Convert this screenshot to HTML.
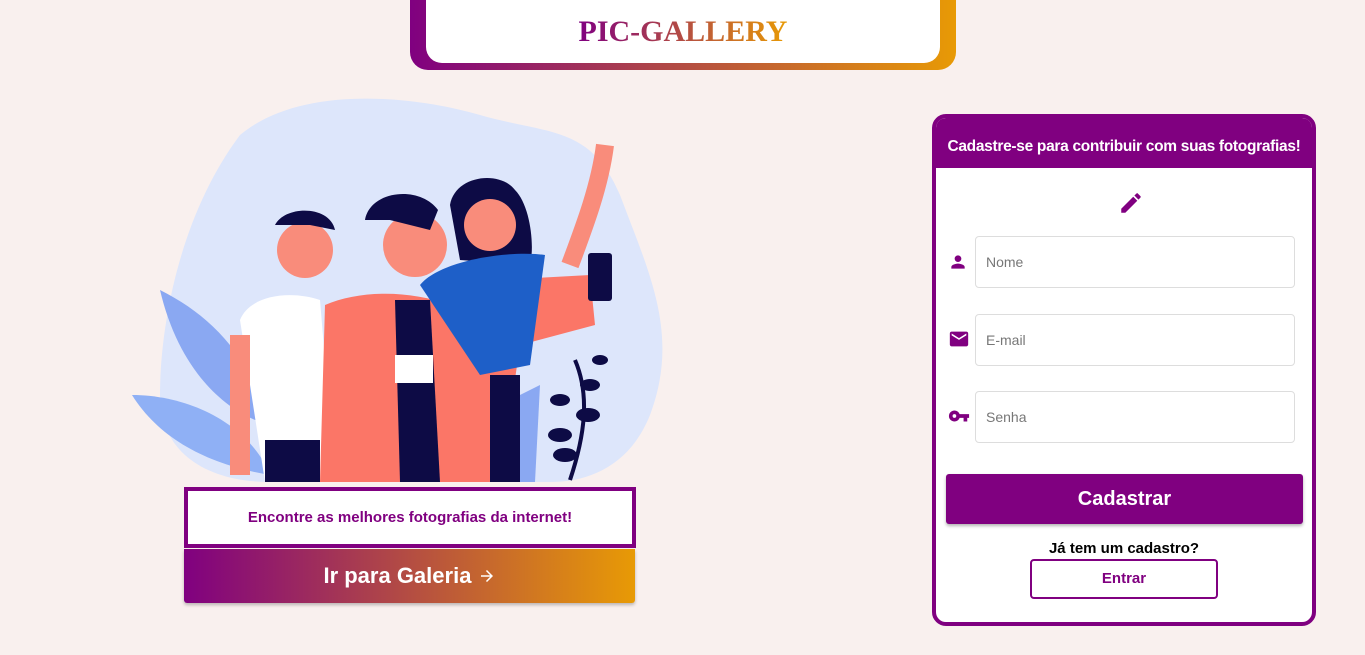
<!DOCTYPE html>
<html><head><meta charset="utf-8"><style>
*{box-sizing:border-box;margin:0;padding:0}
body{width:1365px;height:655px;background:#f9f0ee;font-family:"Liberation Sans",Arial,sans-serif;position:relative;overflow:hidden}
.hdr{position:absolute;left:410px;top:-20px;width:546px;height:90px;border-radius:0 0 18px 18px;background:linear-gradient(90deg,#800080,#e89a05)}
.hdr .in{position:absolute;left:16px;top:0;right:16px;bottom:7px;background:#fff;border-radius:0 0 16px 16px;text-align:center;padding-top:35px}
.hdr span{font-family:"Liberation Serif",serif;font-weight:bold;font-size:30px;background:linear-gradient(90deg,#800080,#e89a05);-webkit-background-clip:text;color:transparent}
.box{position:absolute;left:184px;top:487px;width:452px;height:61px;border:4px solid #800080;background:#fff;text-align:center;line-height:53px;color:#800080;font-weight:bold;font-size:15px}
.go{position:absolute;left:184px;top:549px;width:451px;height:54px;background:linear-gradient(90deg,#800080,#e89a05);color:#fff;font-size:22px;font-weight:bold;text-align:center;line-height:54px;border-radius:0 0 3px 3px;box-shadow:0 2px 3px rgba(0,0,0,.25)}
.card{position:absolute;left:932px;top:114px;width:384px;height:512px;border:4px solid #800080;border-radius:14px;background:#fff;overflow:hidden}
.card .top{height:50px;background:#800080;color:#fff;font-weight:bold;font-size:15.5px;letter-spacing:-0.3px;text-align:center;line-height:58px;white-space:nowrap}
.inp{position:absolute;left:39px;width:320px;height:52px;border:1px solid #ddd;border-radius:4px;color:#777;font-size:14px;line-height:50px;padding-left:10px}
.ic{position:absolute;left:12px}
.btn{position:absolute;left:10px;top:356px;width:357px;height:50px;background:#800080;color:#fff;font-weight:bold;font-size:20px;text-align:center;line-height:50px;border-radius:3px;box-shadow:0 2px 3px rgba(0,0,0,.3)}
.q{position:absolute;left:0;right:0;top:422px;text-align:center;font-weight:bold;font-size:15px}
.ent{position:absolute;left:94px;top:441px;width:188px;height:40px;border:2px solid #800080;border-radius:4px;color:#800080;font-weight:bold;font-size:15px;text-align:center;line-height:36px}
</style></head><body>
<div class="hdr"><div class="in"><span>PIC-GALLERY</span></div></div>

<svg style="position:absolute;left:120px;top:95px" width="560" height="392" viewBox="0 0 560 392">
<path d="M120 40 C180 -10 290 0 360 20 C430 40 470 30 500 100 C530 180 560 240 530 320 C510 370 470 387 430 387 L150 387 C90 387 40 360 40 300 C40 230 60 120 120 40Z" fill="#dde6fb"/>
<path d="M40 195 C90 220 130 260 150 330 C110 320 60 280 40 195Z" fill="#8aa8f2"/>
<path d="M12 300 C70 300 130 330 150 380 C90 370 40 345 12 300Z" fill="#8fb0f5"/>
<path d="M400 300 L420 290 L415 387 L395 387Z" fill="#8aa8f2"/>
<path d="M455 265 C470 300 465 340 450 385" stroke="#0d0b45" stroke-width="4" fill="none"/>
<g fill="#0d0b45"><ellipse cx="440" cy="340" rx="12" ry="7"/><ellipse cx="468" cy="320" rx="12" ry="7"/><ellipse cx="440" cy="305" rx="10" ry="6"/><ellipse cx="470" cy="290" rx="10" ry="6"/><ellipse cx="445" cy="360" rx="12" ry="7"/><ellipse cx="480" cy="265" rx="8" ry="5"/></g>
<path d="M120 225 C130 200 170 195 200 205 L215 387 L145 387 Z" fill="#fff"/>
<circle cx="185" cy="155" r="28" fill="#f98c7b"/>
<path d="M155 130 C165 110 210 110 215 135 L190 130 Z" fill="#0d0b45"/>
<path d="M205 210 C240 195 290 195 330 210 L380 185 L470 180 L475 230 L400 250 L380 387 L200 387 Z" fill="#fb7667"/>
<path d="M275 205 L310 205 L320 387 L280 387 Z" fill="#0d0b45"/><rect x="275" y="260" width="38" height="28" fill="#fff"/>
<circle cx="295" cy="150" r="32" fill="#f98c7b"/>
<path d="M245 125 C250 95 300 90 318 115 L310 135 L270 125 Z" fill="#0d0b45"/>
<path d="M330 110 C335 80 380 75 395 95 C410 110 415 150 410 170 L340 165 Z" fill="#0d0b45"/>
<circle cx="370" cy="130" r="26" fill="#f98c7b"/>
<path d="M300 190 C320 165 390 155 425 160 L410 270 L360 280 Z" fill="#1e5fc8"/>
<path d="M450 170 C465 130 480 90 485 50" stroke="#f98c7b" stroke-width="18" fill="none"/>
<rect x="468" y="158" width="24" height="48" rx="3" fill="#0d0b45"/>
<path d="M110 240 L130 240 L130 380 L110 380 Z" fill="#f98c7b"/>
<rect x="145" y="345" width="55" height="42" fill="#0d0b45"/>
<rect x="370" y="280" width="30" height="107" fill="#0d0b45"/>
</svg>

<div class="box">Encontre as melhores fotografias da internet!</div>
<div class="go">Ir para Galeria <svg width="18" height="18" viewBox="0 0 24 24" style="vertical-align:-2px"><path fill="#fff" d="M12 4l-1.41 1.41L16.17 11H4v2h12.17l-5.58 5.59L12 20l8-8z"/></svg></div>

<div class="card">
<div class="top">Cadastre-se para contribuir com suas fotografias!</div>
<svg style="position:absolute;left:182px;top:72px" width="26" height="26" viewBox="0 0 24 24"><path fill="#800080" d="M3 17.25V21h3.75L17.81 9.94l-3.75-3.75L3 17.25zM20.71 7.04a1 1 0 0 0 0-1.41l-2.34-2.34a1 1 0 0 0-1.41 0l-1.83 1.83 3.75 3.75 1.83-1.83z"/></svg>
<svg class="ic" style="top:134px" width="20" height="20" viewBox="0 0 24 24"><path fill="#800080" d="M12 12c2.21 0 4-1.79 4-4s-1.79-4-4-4-4 1.790-4 4 1.79 4 4 4zm0 2c-2.67 0-8 1.34-8 4v2h16v-2c0-2.66-5.33-4-8-4z"/></svg>
<div class="inp" style="top:118px">Nome</div>
<svg class="ic" style="top:210px" width="22" height="22" viewBox="0 0 24 24"><path fill="#800080" d="M20 4H4c-1.1 0-2 .9-2 2v12c0 1.1.9 2 2 2h16c1.1 0 2-.9 2-2V6c0-1.1-.9-2-2-2zm0 4l-8 5-8-5V6l8 5 8-5v2z"/></svg>
<div class="inp" style="top:196px">E-mail</div>
<svg class="ic" style="top:287px" width="22" height="22" viewBox="0 0 24 24"><path fill="#800080" d="M12.65 10A6 6 0 1 0 12.65 14H17v4h4v-4h2v-4H12.65zM7 14a2 2 0 1 1 0-4 2 2 0 0 1 0 4z"/></svg>
<div class="inp" style="top:273px">Senha</div>
<div class="btn">Cadastrar</div>
<div class="q">Já tem um cadastro?</div>
<div class="ent">Entrar</div>
</div>
</body></html>
